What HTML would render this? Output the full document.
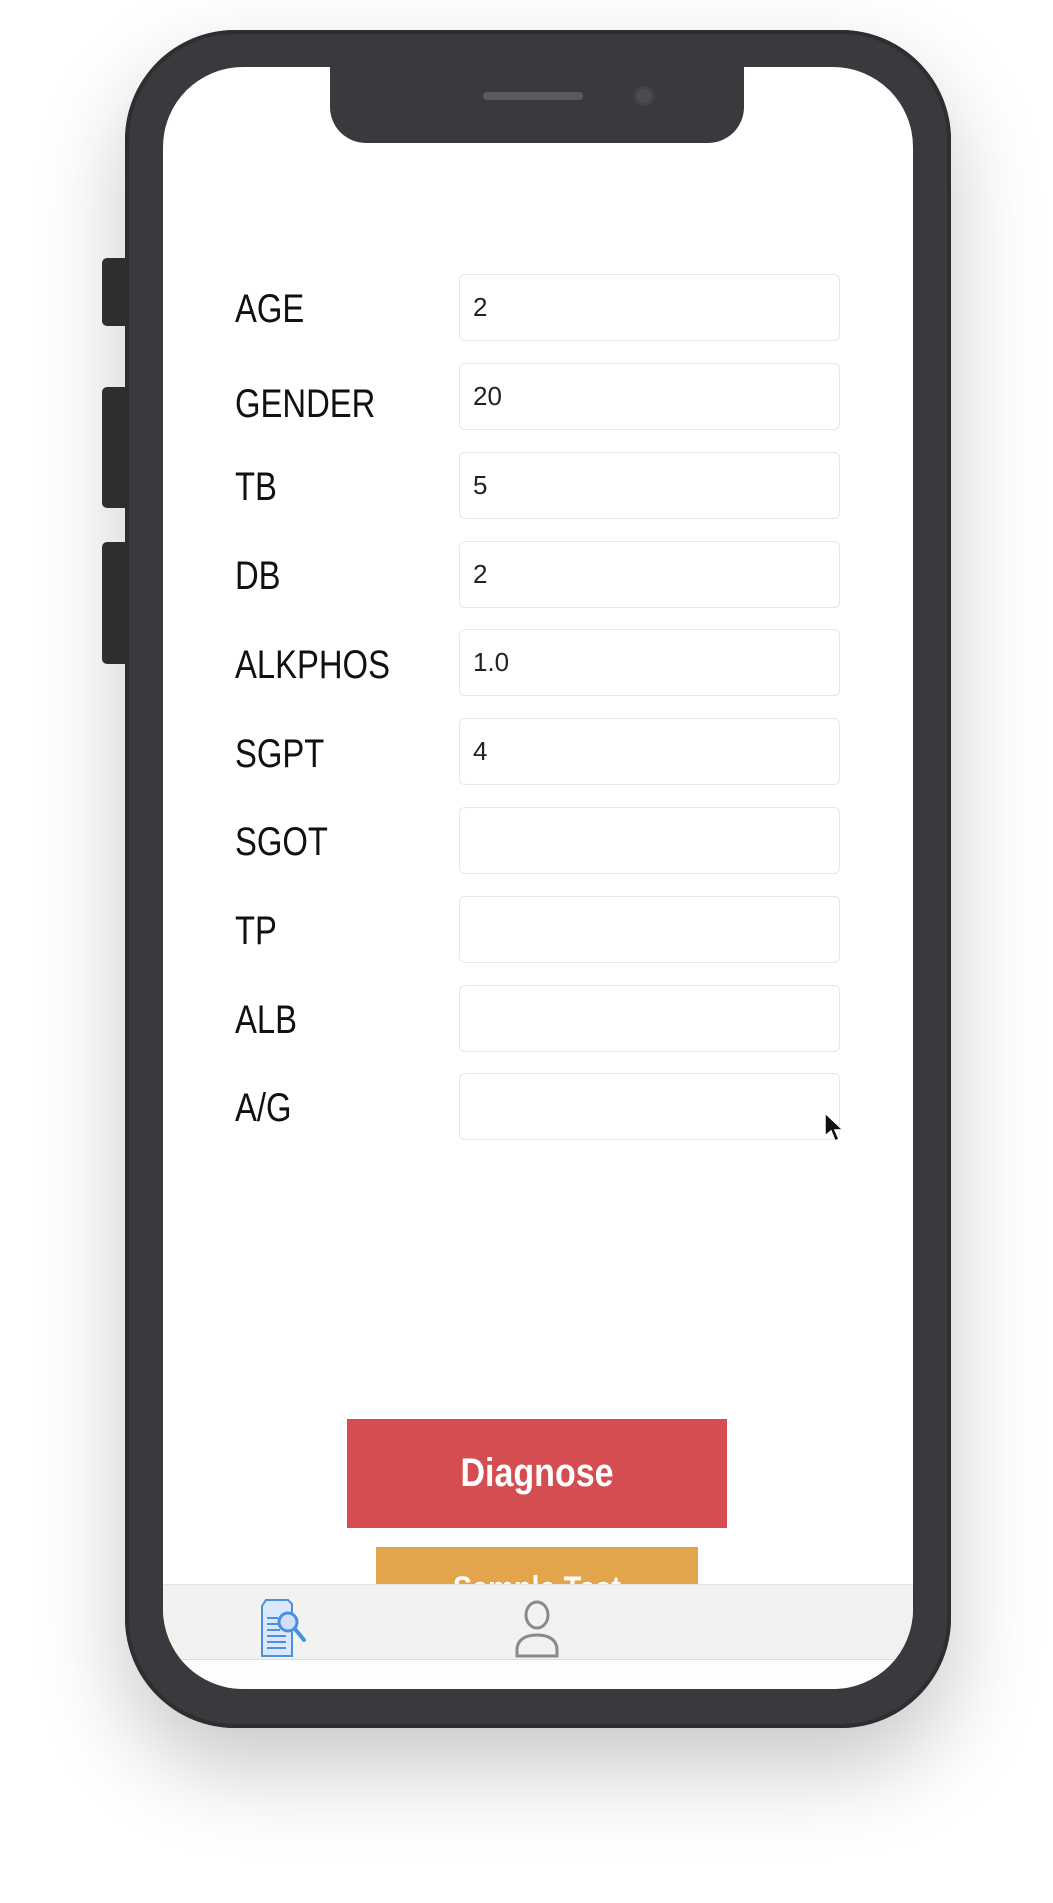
<!DOCTYPE html>
<html><head><meta charset="utf-8"><style>
html,body{margin:0;padding:0;background:#fff;}
body{width:1053px;height:1903px;position:relative;overflow:hidden;font-family:"Liberation Sans",sans-serif;}
.phone{position:absolute;left:125px;top:30px;width:826px;height:1698px;border-radius:110px;background:#3a3a3e;box-shadow:0 40px 90px rgba(0,0,0,0.22),inset 0 0 0 4px #2e2e31;}
.btn{position:absolute;left:102px;width:26px;background:#333336;border-radius:5px 0 0 5px;}
.screen{position:absolute;left:163px;top:67px;width:750px;height:1622px;border-radius:80px;background:#fff;overflow:hidden;}
.notch{position:absolute;left:330px;top:60px;width:414px;height:83px;background:#3a3a3e;border-radius:0 0 36px 36px;}
.spk{position:absolute;left:483px;top:92px;width:100px;height:8px;border-radius:4px;background:#5a5a5f;}
.cam{position:absolute;left:634px;top:86px;width:20px;height:20px;border-radius:50%;background:#4a4a50;box-shadow:inset 0 0 0 3px #444;}
.lbl{position:absolute;left:235px;font-size:40px;color:#111;transform:scaleX(0.82);transform-origin:left center;line-height:40px;}
.inp{position:absolute;left:459px;width:381px;height:67px;border:1px solid #e6e6e6;border-radius:6px;box-sizing:border-box;font-size:26px;color:#222;padding-left:13px;line-height:64px;}
.diag{position:absolute;left:347px;top:1419px;width:380px;height:109px;background:#d44d50;color:#fff;font-weight:bold;font-size:40px;text-align:center;line-height:109px;}
.diag span,.samp span{display:inline-block;transform:scaleX(0.85);}
.samp{position:absolute;left:376px;top:1547px;width:322px;height:37px;background:#e3a54c;color:#fff;font-weight:bold;font-size:34px;text-align:center;line-height:84px;overflow:hidden;}
.tab{position:absolute;left:0;top:1517px;width:750px;height:74px;background:#f2f2f0;border-top:1px solid #e4e4e4;border-bottom:2px solid #ddd;}
.bot{position:absolute;left:0;top:1593px;width:750px;height:29px;background:#fdfdfd;}
</style></head><body>
<div class="btn" style="top:258px;height:68px"></div>
<div class="btn" style="top:387px;height:121px"></div>
<div class="btn" style="top:542px;height:122px"></div>
<div class="phone"></div>
<div class="screen"><div class="tab"></div><div class="bot"></div></div>
<div class="notch"></div>
<div class="spk"></div>
<div class="cam"></div>

<div class="lbl" style="top:289px">AGE</div><div class="inp" style="top:274px">2</div>
<div class="lbl" style="top:384px">GENDER</div><div class="inp" style="top:363px">20</div>
<div class="lbl" style="top:467px">TB</div><div class="inp" style="top:452px">5</div>
<div class="lbl" style="top:556px">DB</div><div class="inp" style="top:541px">2</div>
<div class="lbl" style="top:645px">ALKPHOS</div><div class="inp" style="top:629px">1.0</div>
<div class="lbl" style="top:734px">SGPT</div><div class="inp" style="top:718px">4</div>
<div class="lbl" style="top:822px">SGOT</div><div class="inp" style="top:807px"></div>
<div class="lbl" style="top:911px">TP</div><div class="inp" style="top:896px"></div>
<div class="lbl" style="top:1000px">ALB</div><div class="inp" style="top:985px"></div>
<div class="lbl" style="top:1088px">A/G</div><div class="inp" style="top:1073px"></div>

<svg style="position:absolute;left:824px;top:1112px" width="22" height="32" viewBox="0 0 22 32"><path d="M1 1 L1 24 L7 19 L11 29 L15 27 L11 18 L19 18 Z" fill="#111" stroke="#fff" stroke-width="1.5"/></svg>

<div class="diag"><span>Diagnose</span></div>
<div class="samp"><span>Sample Test</span></div>
<svg style="position:absolute;left:258px;top:1598px" width="52" height="62" viewBox="0 0 52 62">
<path d="M8 2 H30 L34 6 V58 H4 V8 Z" fill="#dbe8fb" stroke="#4a90e2" stroke-width="2"/>
<g stroke="#4a90e2" stroke-width="2"><line x1="9" y1="20" x2="20" y2="20"/><line x1="9" y1="26" x2="20" y2="26"/><line x1="9" y1="32" x2="22" y2="32"/><line x1="9" y1="38" x2="28" y2="38"/><line x1="9" y1="44" x2="28" y2="44"/><line x1="9" y1="50" x2="28" y2="50"/></g>
<circle cx="30" cy="24" r="9" fill="#cfe0f8" stroke="#4a90e2" stroke-width="3"/>
<line x1="37" y1="31" x2="46" y2="42" stroke="#4a90e2" stroke-width="4" stroke-linecap="round"/>
</svg>
<svg style="position:absolute;left:512px;top:1600px" width="50" height="58" viewBox="0 0 50 58">
<ellipse cx="25" cy="15" rx="11" ry="13" fill="none" stroke="#8a8a8a" stroke-width="3"/>
<path d="M5 56 V50 C5 40 13 35 25 35 C37 35 45 40 45 50 V56 Z" fill="none" stroke="#8a8a8a" stroke-width="3"/>
</svg>
</body></html>
